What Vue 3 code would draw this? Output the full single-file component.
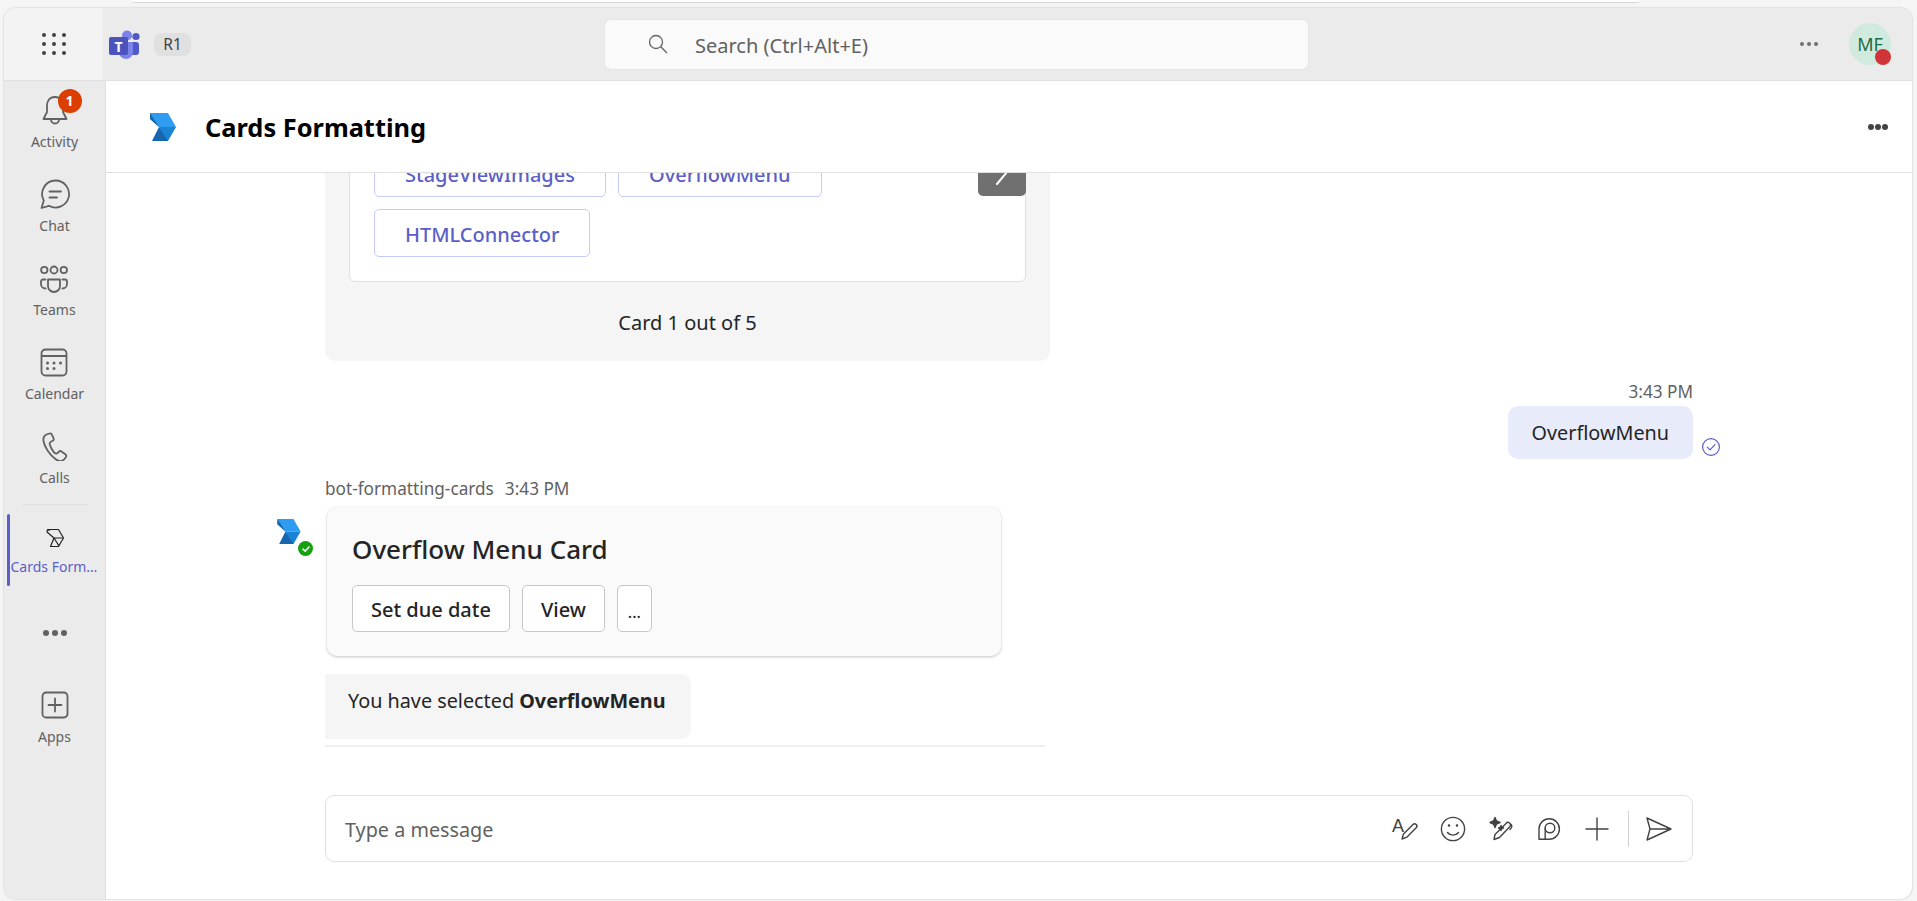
<script setup>
const railTop = [
  {
    label: 'Activity',
    badge: '1',
    d: 'M16 4C10.5 4 8 8 8 13V19L4.5 26H27.5L24 19V13C24 8 21.5 4 16 4ZM12 26.5a4 4 0 0 0 8 0'
  },
  {
    label: 'Chat',
    d: 'M16.5 3.5A13.5 13.5 0 1 1 10 28.8L2.5 31L4.8 23.5A13.5 13.5 0 0 1 16.5 3.5ZM10.5 14.5H22M10.5 20.5H18'
  },
  {
    label: 'Teams',
    d: 'M9.5 9a3.2 3.2 0 1 1-6.4 0a3.2 3.2 0 1 1 6.4 0M19.5 9a3.5 3.5 0 1 1-7 0a3.5 3.5 0 1 1 7 0M29 9a3.2 3.2 0 1 1-6.4 0a3.2 3.2 0 1 1 6.4 0M10 18.5H22V25a6 6 0 0 1-12 0ZM7.5 18.5H5a2 2 0 0 0-2 2V23a4.5 4.5 0 0 0 4.5 4.5M24.5 18.5H27a2 2 0 0 1 2 2V23a4.5 4.5 0 0 1-4.5 4.5'
  },
  {
    label: 'Calendar',
    d: 'M7.5 4.5H24.5a4 4 0 0 1 4 4V26.5a4 4 0 0 1-4 4H7.5a4 4 0 0 1-4-4V8.5a4 4 0 0 1 4-4ZM3.5 11H28.5',
    dots: true
  },
  {
    label: 'Calls',
    d: 'M10.5 4.5L7.5 5.5C5 6.5 4 9 4.5 12C5.5 18 10.5 26 17 30.5C20 32.5 23.5 32.5 25.5 30L27 28C27.5 27 27.2 26 26.3 25.3L22.5 22.5C21.5 21.8 20.5 22 19.7 22.8L18.5 24C17.5 25 16 24.5 15 23.3C13 21 11.5 18 10.8 15.5C10.4 14 11 13 12.2 12.5L13.5 12C14.5 11.5 15 10.5 14.6 9.3L13 5.8C12.6 4.8 11.5 4.2 10.5 4.5Z'
  }
]

const tags = ['StageViewImages', 'OverflowMenu', 'HTMLConnector']
const actions = ['Set due date', 'View']
</script>

<template>
  <div class="page">
    <div class="strip"></div>
    <div class="window">
      <header class="topbar">
        <div class="topbar-left">
          <div class="waffle">
            <span v-for="n in 9" :key="n"></span>
          </div>
          <svg class="teams-logo" width="32" height="30" viewBox="0 0 32 30">
            <circle cx="28" cy="6.5" r="3.6" fill="#5059c9" />
            <rect x="21" y="12" width="10" height="13" rx="3" fill="#5059c9" />
            <circle cx="19" cy="5.5" r="5" fill="#7b83eb" />
            <path d="M11 12H25V22a7 7 0 0 1-14 0Z" fill="#7b83eb" />
            <rect x="1" y="7" width="19" height="18" rx="2" fill="#4b53bc" />
            <text x="10.5" y="21.5" class="teams-t">T</text>
          </svg>
          <span class="ring">R1</span>
        </div>
        <div class="search">
          <svg width="22" height="22" viewBox="0 0 22 22" fill="none" stroke="#616161" stroke-width="1.3">
            <circle cx="9" cy="9" r="6.5" />
            <path d="M13.8 13.8L20 20" />
          </svg>
          <span>Search (Ctrl+Alt+E)</span>
        </div>
        <div class="topbar-right">
          <div class="more small"><i></i><i></i><i></i></div>
          <div class="avatar">
            MF
            <span class="presence"></span>
          </div>
        </div>
      </header>

      <div class="main">
        <nav class="rail">
          <div v-for="item in railTop" :key="item.label" class="rail-item">
            <div class="rail-icon">
              <svg width="32" height="32" viewBox="0 0 32 32" fill="none" stroke="#616161" stroke-width="1.8" stroke-linecap="round" stroke-linejoin="round">
                <path :d="item.d" />
                <path v-if="item.dots" d="M9.5 18h.01M16 18h.01M22.5 18h.01M9.5 23.5h.01M16 23.5h.01" stroke-width="3" />
              </svg>
              <span v-if="item.badge" class="badge">{{ item.badge }}</span>
            </div>
            <span class="rail-label">{{ item.label }}</span>
          </div>
          <div class="rail-divider"></div>
          <div class="rail-app">
            <svg width="24" height="24" viewBox="0 0 24 24" fill="none" stroke="#242424" stroke-width="1.2" stroke-linejoin="round">
              <path d="M4.5 3.5H15.5L20.5 12L15.5 20.5H7.5L11 12L4 6Z" />
              <path d="M4.5 4.5L8 3.5M11 12H20M11 12L16 20" />
            </svg>
            <span class="rail-label active">Cards Formatting</span>
          </div>
          <div class="rail-more">
            <div class="more"><i></i><i></i><i></i></div>
          </div>
          <div class="rail-item">
            <div class="rail-icon">
              <svg width="32" height="32" viewBox="0 0 32 32" fill="none" stroke="#616161" stroke-width="1.8" stroke-linecap="round" stroke-linejoin="round">
                <path d="M7 4.5H25a3.5 3.5 0 0 1 3.5 3.5V26a3.5 3.5 0 0 1-3.5 3.5H7a3.5 3.5 0 0 1-3.5-3.5V8A3.5 3.5 0 0 1 7 4.5ZM16 10.5V23.5M9.5 17H22.5" />
              </svg>
            </div>
            <span class="rail-label">Apps</span>
          </div>
        </nav>

        <main class="content">
          <div class="chat-header">
            <svg width="26" height="28" viewBox="0 0 26 28">
              <path d="M0 0H18L26 14H9L0 6Z" fill="#2f9cf1" />
              <path d="M0 0L9 14L0 6Z" fill="#1667a8" />
              <path d="M9 14H26L18 28H15Z" fill="#1a83d4" />
              <path d="M9 14L18 28H2Z" fill="#1667b0" />
            </svg>
            <h1>Cards Formatting</h1>
            <div class="more dark"><i></i><i></i><i></i></div>
          </div>

          <div class="thread">
            <section class="carousel">
              <div class="carousel-card">
                <div class="tags">
                  <button v-for="tag in tags" :key="tag" class="tag">{{ tag }}</button>
                </div>
                <div class="next">
                  <svg width="16" height="28" viewBox="0 0 16 28" fill="none" stroke="#fff" stroke-width="2" stroke-linecap="round" stroke-linejoin="round">
                    <path d="M3 2L13 14L3 26" />
                  </svg>
                </div>
              </div>
              <p class="carousel-foot">Card 1 out of 5</p>
            </section>

            <div class="own-time">3:43 PM</div>
            <div class="own-msg">
              <div class="own-bubble">
                OverflowMenu
                <svg class="seen" width="20" height="20" viewBox="0 0 20 20" fill="none" stroke="#5b5fc7" stroke-width="1.2">
                  <circle cx="10" cy="10" r="8.4" />
                  <path d="M6.3 10.2L9 12.9L14 7.6" stroke-linecap="round" stroke-linejoin="round" />
                </svg>
              </div>
            </div>

            <div class="bot-meta">bot-formatting-cards<span>3:43 PM</span></div>
            <div class="bot-row">
              <div class="bot-avatar">
                <svg width="24" height="25" viewBox="0 0 26 28">
                  <path d="M0 0H18L26 14H9L0 6Z" fill="#2f9cf1" />
                  <path d="M0 0L9 14L0 6Z" fill="#1667a8" />
                  <path d="M9 14H26L18 28H15Z" fill="#1a83d4" />
                  <path d="M9 14L18 28H2Z" fill="#1667b0" />
                </svg>
                <span class="bot-status">
                  <svg width="10" height="10" viewBox="0 0 10 10" fill="none" stroke="#fff" stroke-width="1.6" stroke-linecap="round" stroke-linejoin="round">
                    <path d="M2 5.2L4.2 7.2L8 3" />
                  </svg>
                </span>
              </div>
              <div class="bot-card">
                <h2>Overflow Menu Card</h2>
                <div class="actions">
                  <button v-for="action in actions" :key="action" class="action">{{ action }}</button>
                  <button class="action overflow">...</button>
                </div>
              </div>
            </div>
            <div class="bot-bubble">You have selected <b>OverflowMenu</b></div>
            <div class="thread-line"></div>
          </div>

          <div class="compose-wrap">
            <div class="compose">
              <span class="placeholder">Type a message</span>
              <div class="tools">
                <button class="tool">
                  <svg width="32" height="32" viewBox="0 0 32 32" fill="none" stroke="#424242" stroke-width="1.4" stroke-linecap="round" stroke-linejoin="round">
                    <text x="3" y="19" class="tool-a">A</text>
                    <path d="M13 26L14.5 21L24 11.5a2.2 2.2 0 0 1 3.2 3.2L17.8 24.2Z" />
                  </svg>
                </button>
                <button class="tool">
                  <svg width="32" height="32" viewBox="0 0 32 32" fill="none" stroke="#424242" stroke-width="1.4" stroke-linecap="round">
                    <circle cx="16" cy="16" r="11.6" />
                    <path d="M10.5 19.5a7 7 0 0 0 11 0" />
                    <path d="M12 12.5h.01M20 12.5h.01" stroke-width="2.6" />
                  </svg>
                </button>
                <button class="tool">
                  <svg width="32" height="32" viewBox="0 0 32 32" fill="none" stroke="#424242" stroke-width="1.4" stroke-linecap="round" stroke-linejoin="round">
                    <path d="M9 26.5L10 21.5L21 10.5a2.3 2.3 0 0 1 4 3L14.5 24.5Z" />
                    <path d="M26 11.5c1.5 1.5 1 3-1 5" />
                    <path d="M10 4.5L11.5 8L15 9.5L11.5 11L10 14.5L8.5 11L5 9.5L8.5 8Z" fill="#424242" />
                    <path d="M16 12.5L16.7 14.3L18.5 15L16.7 15.7L16 17.5L15.3 15.7L13.5 15L15.3 14.3Z" fill="#424242" />
                  </svg>
                </button>
                <button class="tool">
                  <svg width="32" height="32" viewBox="0 0 32 32" fill="none" stroke="#424242" stroke-width="1.4" stroke-linecap="round" stroke-linejoin="round">
                    <path d="M6 16a10.2 10.2 0 1 1 10.2 10.2H6Z" />
                    <circle cx="17" cy="15" r="4.8" />
                    <path d="M12.2 15V26" />
                  </svg>
                </button>
                <button class="tool">
                  <svg width="32" height="32" viewBox="0 0 32 32" fill="none" stroke="#424242" stroke-width="1.4" stroke-linecap="round">
                    <path d="M16 5V27M5 16H27" />
                  </svg>
                </button>
                <span class="tool-sep"></span>
                <button class="tool">
                  <svg width="32" height="32" viewBox="0 0 32 32" fill="none" stroke="#424242" stroke-width="1.4" stroke-linecap="round" stroke-linejoin="round">
                    <path d="M4 5L28 16L4 27L7 16ZM7 16H28" />
                  </svg>
                </button>
              </div>
            </div>
          </div>
        </main>
      </div>
    </div>
  </div>
</template>

<style>
html,
body {
  margin: 0;
  background: #f5f5f5;
}
</style>

<style scoped>
.page {
  height: 901px;
  box-sizing: border-box;
  display: flex;
  flex-direction: column;
  padding: 0 5px 2px 4px;
  overflow: hidden;
  font-family: "Noto Sans", "Open Sans", sans-serif;
  color: #242424;
}

.strip {
  height: 2px;
  flex-shrink: 0;
  margin: 0 272px 5px 128px;
  background: #fff;
  border-bottom: 1px solid #d6d6d6;
  border-radius: 0 0 6px 6px;
}

.window {
  flex: 1;
  min-height: 0;
  display: flex;
  flex-direction: column;
  border-radius: 12px;
  overflow: hidden;
  background: #fff;
  box-shadow: 0 0 2px rgba(0, 0, 0, 0.28);
}

/* top bar */
.topbar {
  height: 73px;
  flex-shrink: 0;
  box-sizing: border-box;
  display: flex;
  align-items: center;
  background: #ebebeb;
  border-bottom: 1px solid #e0e0e0;
}

.topbar-left {
  width: 601px;
  height: 100%;
  flex-shrink: 0;
  display: flex;
  align-items: center;
}

.waffle {
  width: 99px;
  height: 100%;
  flex-shrink: 0;
  box-sizing: border-box;
  background: #f3f3f3;
  display: grid;
  grid-template-columns: repeat(3, 4px);
  grid-template-rows: repeat(3, 4px);
  gap: 5px 6px;
  justify-content: center;
  align-content: center;
}

.waffle span {
  border-radius: 50%;
  background: #424242;
}

.teams-logo {
  margin-left: 5px;
  margin-top: 2px;
}

.teams-t {
  font-size: 14px;
  font-weight: 700;
  fill: #fff;
  text-anchor: middle;
}

.ring {
  margin-left: 14px;
  width: 37px;
  height: 23px;
  border-radius: 8px;
  background: #e0e0e0;
  font-size: 15.5px;
  line-height: 23px;
  text-align: center;
  color: #424242;
}

.search {
  width: 703px;
  height: 49px;
  box-sizing: border-box;
  flex-shrink: 0;
  display: flex;
  align-items: center;
  gap: 26px;
  padding-left: 42px;
  background: #fafafa;
  border-radius: 5px;
  box-shadow: 0 0 1px rgba(0, 0, 0, 0.2);
  font-size: 20px;
  color: #616161;
}

.search span {
  padding-top: 3px;
}

.topbar-right {
  flex: 1;
  display: flex;
  align-items: center;
  justify-content: flex-end;
  gap: 31px;
  padding-right: 21px;
}

.more {
  display: flex;
  gap: 3px;
}

.more i {
  width: 6px;
  height: 6px;
  border-radius: 50%;
  background: #616161;
}

.more.small i {
  width: 4px;
  height: 4px;
  background: #707070;
}

.more.dark {
  gap: 1px;
}

.more.dark i {
  background: #424242;
}

.avatar {
  position: relative;
  width: 42px;
  height: 42px;
  border-radius: 50%;
  background: #d0ebdd;
  color: #1f6b45;
  font-size: 18px;
  line-height: 42px;
  text-align: center;
}

.presence {
  position: absolute;
  right: 0;
  bottom: 0;
  width: 16px;
  height: 16px;
  border-radius: 50%;
  background: #d13438;
}

/* left rail */
.main {
  flex: 1;
  min-height: 0;
  display: flex;
}

.rail {
  width: 102px;
  flex-shrink: 0;
  box-sizing: border-box;
  padding-top: 3px;
  background: #ebebeb;
  border-right: 1px solid #e0e0e0;
  display: flex;
  flex-direction: column;
  align-items: center;
}

.rail-item {
  height: 84px;
  flex-shrink: 0;
  box-sizing: border-box;
  padding-top: 9px;
  display: flex;
  flex-direction: column;
  align-items: center;
  gap: 7px;
}

.rail-icon {
  position: relative;
  width: 32px;
  height: 32px;
}

.rail-icon svg {
  display: block;
}

.badge {
  position: absolute;
  top: -4px;
  left: 19px;
  width: 24px;
  height: 24px;
  border-radius: 50%;
  background: #dc3e00;
  color: #fff;
  font-size: 14px;
  font-weight: 700;
  line-height: 24px;
  text-align: center;
}

.rail-label {
  font-size: 14px;
  line-height: 20px;
  color: #616161;
  white-space: nowrap;
}

.rail-label.active {
  width: 88px;
  overflow: hidden;
  text-overflow: ellipsis;
  text-align: center;
  color: #5b5fc7;
}

.rail-divider {
  width: 66px;
  height: 1px;
  flex-shrink: 0;
  background: #e0e0e0;
}

.rail-app {
  position: relative;
  align-self: stretch;
  height: 72px;
  flex-shrink: 0;
  box-sizing: border-box;
  margin-top: 9px;
  padding-top: 12px;
  display: flex;
  flex-direction: column;
  align-items: center;
  gap: 7px;
}

.rail-app::before {
  content: '';
  position: absolute;
  left: 3px;
  top: 0;
  bottom: 0;
  width: 3px;
  border-radius: 2px;
  background: #5b5fc7;
}

.rail-more {
  height: 93px;
  flex-shrink: 0;
  display: flex;
  align-items: center;
}

/* chat */
.content {
  flex: 1;
  min-width: 0;
  display: flex;
  flex-direction: column;
}

.chat-header {
  height: 92px;
  flex-shrink: 0;
  box-sizing: border-box;
  display: flex;
  align-items: center;
  padding: 0 24px 0 44px;
  border-bottom: 1px solid #e0e0e0;
}

.chat-header h1 {
  flex: 1;
  margin: 0 0 0 29px;
  font-size: 25.4px;
  font-weight: 700;
  color: #000;
}

.thread {
  flex: 1;
  min-height: 0;
  overflow: hidden;
  display: flex;
  flex-direction: column;
  justify-content: flex-end;
  padding: 0 219px;
}

.thread > * {
  flex-shrink: 0;
}

.carousel {
  width: 725px;
  box-sizing: border-box;
  padding: 60px 24px 0;
  background: #f5f5f5;
  border-radius: 0 0 10px 10px;
}

.carousel-card {
  position: relative;
  padding: 40px 24px 24px;
  background: #fff;
  border: 1px solid #e0e0e0;
  border-radius: 6px;
}

.tags {
  display: flex;
  flex-wrap: wrap;
  gap: 12px;
}

.tag {
  height: 48px;
  padding: 2px 30px 0;
  background: #fff;
  border: 1px solid #c5cbfa;
  border-radius: 5px;
  font: 500 20px "Noto Sans", sans-serif;
  color: #5b5fc7;
}

.next {
  position: absolute;
  top: 39px;
  right: -1px;
  width: 48px;
  height: 48px;
  display: flex;
  align-items: center;
  justify-content: center;
  border-radius: 5px;
  background: #707070;
}

.carousel-foot {
  height: 79px;
  margin: 0;
  font-size: 20px;
  line-height: 82px;
  text-align: center;
}

.own-time {
  height: 24px;
  margin-top: 19px;
  margin-bottom: 2px;
  font-size: 17.2px;
  line-height: 24px;
  text-align: right;
  color: #616161;
}

.own-msg {
  display: flex;
  justify-content: flex-end;
}

.own-bubble {
  position: relative;
  height: 53px;
  box-sizing: border-box;
  padding: 0 24px;
  line-height: 54px;
  font-size: 19.8px;
  background: #e8ebfa;
  border-radius: 10px;
}

.seen {
  position: absolute;
  right: -28px;
  bottom: 2px;
}

.bot-meta {
  height: 24px;
  margin-top: 18px;
  margin-bottom: 6px;
  font-size: 17.2px;
  line-height: 24px;
  color: #616161;
}

.bot-meta span {
  margin-left: 11px;
}

.bot-row {
  display: flex;
  margin-left: -48px;
}

.bot-avatar {
  position: relative;
  width: 50px;
  flex-shrink: 0;
  padding-top: 12px;
  box-sizing: border-box;
}

.bot-avatar > svg {
  display: block;
}

.bot-status {
  position: absolute;
  left: 21px;
  top: 34px;
  width: 15px;
  height: 15px;
  display: flex;
  align-items: center;
  justify-content: center;
  border-radius: 50%;
  background: #13a10e;
}

.bot-card {
  width: 674px;
  height: 149px;
  box-sizing: border-box;
  padding: 20px 25px 0;
  background: #fafafa;
  border-radius: 10px;
  box-shadow: 0 1px 3px rgba(0, 0, 0, 0.24);
}

.bot-card h2 {
  margin: 0 0 13px;
  font-size: 26px;
  font-weight: 500;
  line-height: 45px;
}

.actions {
  display: flex;
  gap: 12px;
}

.action {
  height: 47px;
  padding: 2px 18px 0;
  background: #fff;
  border: 1px solid #c7c7c7;
  border-radius: 5px;
  font: 500 20px "Noto Sans", sans-serif;
  color: #242424;
}

.action.overflow {
  width: 35px;
  padding: 6px 0 0;
  font-size: 16px;
}

.bot-bubble {
  width: 366px;
  height: 65px;
  box-sizing: border-box;
  margin-top: 18px;
  padding-left: 23px;
  font-size: 19.8px;
  line-height: 53px;
  background: #f5f5f5;
  border-radius: 0 10px 10px 0;
}

.thread-line {
  width: 720px;
  height: 2px;
  margin: 6px 0 48px;
  background: #f0f0f0;
}

/* compose box */
.compose-wrap {
  flex-shrink: 0;
  padding: 0 219px 37px;
}

.compose {
  height: 67px;
  box-sizing: border-box;
  display: flex;
  align-items: center;
  justify-content: space-between;
  padding: 0 9px 0 19px;
  border: 1px solid #e0e0e0;
  border-radius: 9px;
}

.placeholder {
  padding-top: 2px;
  font-size: 19.8px;
  color: #616161;
}

.tools {
  display: flex;
  align-items: center;
}

.tool {
  width: 48px;
  height: 48px;
  padding: 0;
  display: flex;
  align-items: center;
  justify-content: center;
  background: none;
  border: none;
}

.tool-a {
  font-size: 18px;
  stroke: none;
  fill: #424242;
}

.tool-sep {
  width: 1px;
  height: 36px;
  margin: 0 6px 0 7px;
  background: #d1d1d1;
}
</style>
